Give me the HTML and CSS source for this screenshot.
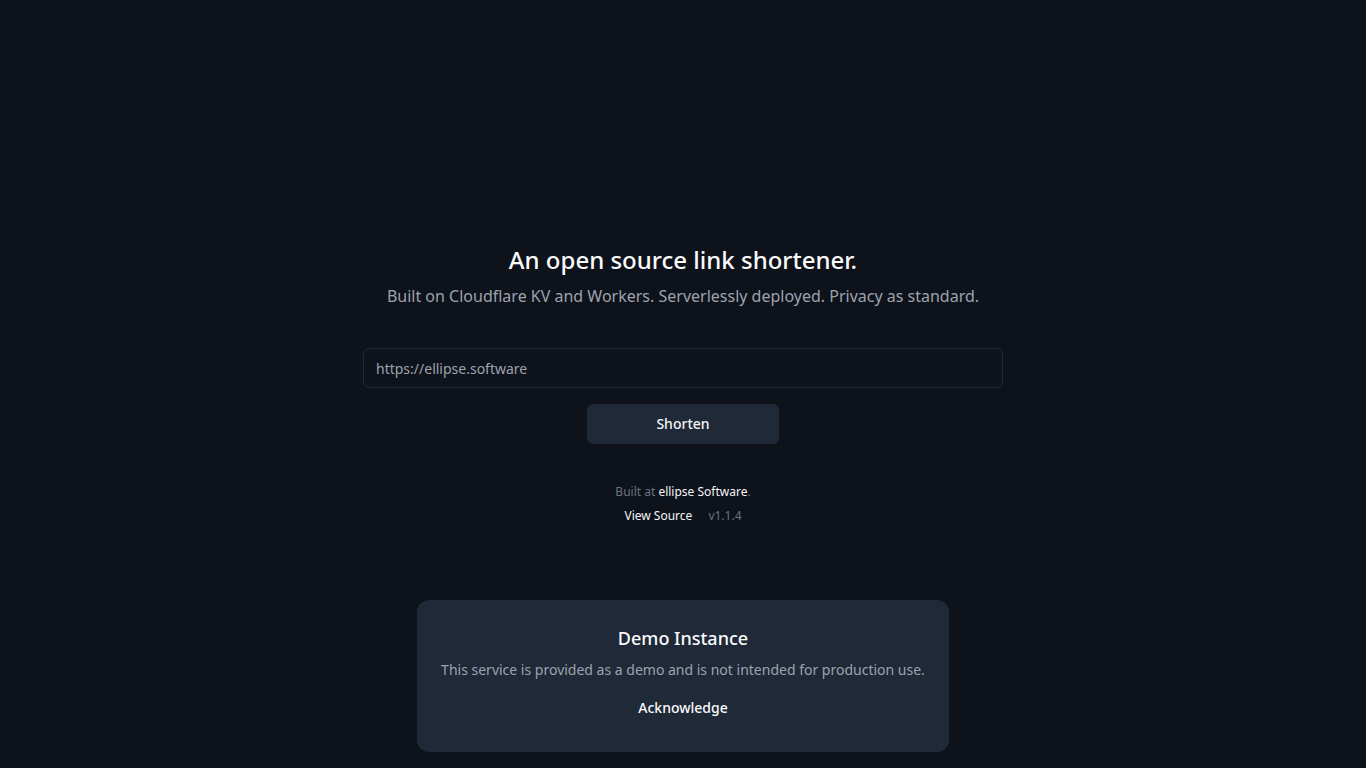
FILE: index.html
```html
<!DOCTYPE html>
<html lang="en">
<head>
    <meta charset="UTF-8">
    <meta name="viewport" content="width=device-width, initial-scale=1.0">
    <title>Link Shortener</title>
    <link rel="stylesheet" href="styles.css">
</head>
<body>
    <main class="container">
        <h1>An open source link shortener.</h1>
        <p class="subtitle">Built on Cloudflare KV and Workers. Serverlessly deployed. Privacy as standard.</p>

        <form id="shortenForm" class="shorten-form">
            <input type="text" id="url" placeholder="https://ellipse.software">
            <button type="submit" class="shorten-btn">Shorten</button>
        </form>

        <footer class="footer">
            <p>Built at <a href="#">ellipse Software</a>.</p>
            <p class="links"><a href="#">View Source</a><span class="version">v1.1.4</span></p>
        </footer>
    </main>

    <div class="notice-wrap">
        <div class="notice">
            <h2>Demo Instance</h2>
            <p>This service is provided as a demo and is not intended for production use.</p>
            <button class="ack-btn">Acknowledge</button>
        </div>
    </div>
</body>
</html>
```

FILE: styles.css
```css
body {
    font-family: "Noto Sans", "Open Sans", sans-serif;
    background-color: #0e121a;
    color: #f3f4f6;
    margin: 0;
    padding: 0;
    height: 100vh;
    display: flex;
    justify-content: center;
    align-items: center;
}

.container {
    display: flex;
    flex-direction: column;
    align-items: center;
    text-align: center;
}

h1 {
    font-size: 24px;
    line-height: 32px;
    font-weight: 500;
    margin: 0;
    color: #f9fafb;
}

.subtitle {
    font-size: 16px;
    line-height: 24px;
    margin: 8px 0 0;
    color: #9ca3af;
}

.shorten-form {
    margin-top: 40px;
    display: flex;
    flex-direction: column;
    align-items: center;
    gap: 16px;
}

.shorten-form input {
    width: 640px;
    height: 40px;
    box-sizing: border-box;
    padding: 0 12px;
    font-family: inherit;
    font-size: 14px;
    color: #f3f4f6;
    background-color: #0e121a;
    border: 1px solid #1f2937;
    border-radius: 6px;
    outline: none;
}

.shorten-form input::placeholder {
    color: #9ca3af;
}

.shorten-btn {
    width: 192px;
    height: 40px;
    padding: 0 0 2px;
    font-family: inherit;
    font-size: 14px;
    font-weight: 500;
    color: #f3f4f6;
    background-color: #1f2937;
    border: none;
    border-radius: 6px;
    cursor: pointer;
}

.footer {
    margin-top: 40px;
    font-size: 12px;
    line-height: 16px;
    color: #6b7280;
}

.footer p {
    margin: 0;
}

.footer p + p {
    margin-top: 8px;
}

.footer a {
    color: #f3f4f6;
    text-decoration: none;
}

.version {
    margin-left: 16px;
    color: #6b7280;
}

.notice-wrap {
    position: fixed;
    left: 0;
    right: 0;
    bottom: 16px;
    display: flex;
    justify-content: center;
}

.notice {
    width: 532px;
    box-sizing: border-box;
    padding: 24px 24px 26px;
    background-color: #1f2937;
    border-radius: 12px;
    text-align: center;
}

.notice h2 {
    font-size: 18px;
    line-height: 28px;
    font-weight: 500;
    margin: 0;
    color: #f9fafb;
}

.notice p {
    font-size: 14px;
    line-height: 20px;
    margin: 8px 0 0;
    color: #9ca3af;
}

.ack-btn {
    margin-top: 10px;
    padding: 8px 16px;
    font-family: inherit;
    font-size: 14px;
    line-height: 20px;
    font-weight: 500;
    color: #f9fafb;
    background: none;
    border: none;
    cursor: pointer;
}
```
